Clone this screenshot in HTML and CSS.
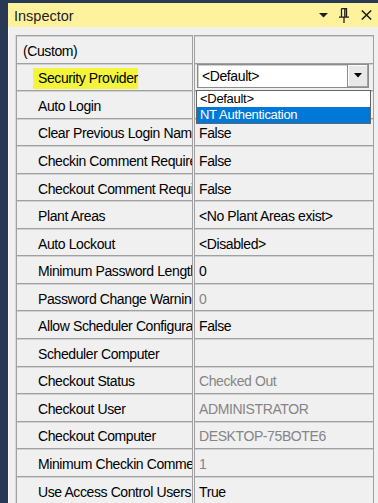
FILE: index.html
```html
<!DOCTYPE html>
<html>
<head>
<meta charset="utf-8">
<link rel="stylesheet" href="styles.css">
</head>
<body>
<div class="window">
  <div class="titlebar">
    <span class="title">Inspector</span>
    <div class="tools">
      <svg class="ico-drop" width="9" height="5" viewBox="0 0 9 5"><polygon points="0,0 9,0 4.5,4.5" fill="#1e1e1e"/></svg>
      <svg class="ico-pin" width="10" height="15" viewBox="0 0 10 15"><path d="M2.5 0.5 H7.5 V9 M2.5 0.5 V9 M5.8 0.5 V9 M0 9.2 H10 M5 9.2 V15" stroke="#1e1e1e" stroke-width="1.3" fill="none"/></svg>
      <svg class="ico-close" width="11" height="10" viewBox="0 0 11 10"><path d="M0.8 0.5 L10.2 9.5 M10.2 0.5 L0.8 9.5" stroke="#1e1e1e" stroke-width="1.5" fill="none"/></svg>
    </div>
  </div>
  <div class="panel">
    <div class="grid">
      <div class="cell name cat">(Custom)</div><div class="cell value"></div>
      <div class="cell name"><span class="hl">Security Provider</span></div>
      <div class="cell value combo-cell">
        <div class="combo">
          <span class="combo-text">&lt;Default&gt;</span>
          <span class="combo-btn"><svg width="8" height="5" viewBox="0 0 8 5"><polygon points="0,0 8,0 4,4.5" fill="#000"/></svg></span>
        </div>
        <div class="popup">
          <div class="opt">&lt;Default&gt;</div>
          <div class="opt sel">NT Authentication</div>
        </div>
      </div>
      <div class="cell name">Auto Login</div><div class="cell value"></div>
      <div class="cell name">Clear Previous Login Name</div><div class="cell value">False</div>
      <div class="cell name">Checkin Comment Required</div><div class="cell value">False</div>
      <div class="cell name">Checkout Comment Required</div><div class="cell value">False</div>
      <div class="cell name">Plant Areas</div><div class="cell value">&lt;No Plant Areas exist&gt;</div>
      <div class="cell name">Auto Lockout</div><div class="cell value">&lt;Disabled&gt;</div>
      <div class="cell name">Minimum Password Length</div><div class="cell value">0</div>
      <div class="cell name">Password Change Warning</div><div class="cell value muted">0</div>
      <div class="cell name">Allow Scheduler Configuration</div><div class="cell value">False</div>
      <div class="cell name">Scheduler Computer</div><div class="cell value"></div>
      <div class="cell name">Checkout Status</div><div class="cell value muted">Checked Out</div>
      <div class="cell name">Checkout User</div><div class="cell value muted">ADMINISTRATOR</div>
      <div class="cell name">Checkout Computer</div><div class="cell value muted">DESKTOP-75BOTE6</div>
      <div class="cell name">Minimum Checkin Comment</div><div class="cell value muted">1</div>
      <div class="cell name">Use Access Control Users</div><div class="cell value">True</div>
    </div>
  </div>
</div>
</body>
</html>
```
FILE: styles.css
```css
* { box-sizing: border-box; }

html, body {
  margin: 0;
  width: 378px;
  height: 503px;
  overflow: hidden;
  background: #293955;
  font-family: "Liberation Sans", Arial, sans-serif;
}

.window {
  height: 503px;
  padding: 3px 0 0 8px;
  display: flex;
  flex-direction: column;
}

.titlebar {
  height: 24px;
  flex: none;
  background: #fff29d;
  display: flex;
  align-items: center;
  padding: 0 6px 0 6px;
}

.title {
  font-size: 14.5px;
  color: #1e1e1e;
  padding-top: 1px;
}

.tools {
  margin-left: auto;
  display: flex;
  align-items: flex-start;
  height: 15px;
}

.ico-drop { margin-top: 5px; }
.ico-pin { margin-left: 11px; margin-top: 0; }
.ico-close { margin-left: 12px; margin-top: 2px; }

.panel {
  flex: 1;
  background: #f0f0f0;
  border-left: 1px solid #fafafa;
  padding: 8px 0 0 7px;
  overflow: hidden;
}

.grid {
  display: grid;
  grid-template-columns: 176px 180px;
  column-gap: 1px;
  grid-auto-rows: 27.56px;
  width: 358px;
  border-left: 1px solid #a0a0a0;
  box-shadow: -1px 0 0 #d8d8d8;
}

.cell {
  border-top: 1px solid #a0a0a0;
  box-shadow: inset 0 1px 0 #d2d2d2;
  display: flex;
  align-items: center;
  padding-top: 3px;
  white-space: nowrap;
  overflow: hidden;
  font-size: 14px;
  letter-spacing: -0.4px;
  color: #000;
  background: #f0f0f0;
}

.name {
  padding-left: 21px;
  border-right: 1px solid #a0a0a0;
}

.name.cat { padding-left: 6px; }

.value {
  padding-left: 4px;
  border-left: 1px solid #a0a0a0;
  border-right: 1px solid #a0a0a0;
}

.muted { color: #858585; }

.hl {
  background: #f4f53a;
  padding: 2px 0 3px 5px;
  margin-left: -5px;
}

.combo-cell {
  position: relative;
  overflow: visible;
  align-items: flex-start;
  padding: 0 0 0 2px;
}

.combo {
  width: 172px;
  height: 24px;
  background: #fff;
  border: 1px solid #8c8c8c;
  box-shadow: inset 1px 1px 0 #d0d0d0;
  display: flex;
  align-items: center;
}

.combo-text {
  flex: 1;
  padding-left: 4px;
  padding-top: 1px;
}

.combo-btn {
  width: 21px;
  height: 100%;
  background: #e8e8e8;
  border-left: 1px solid #8c8c8c;
  box-shadow: inset -1px -1px 0 #a0a0a0, inset 1px 1px 0 #fff;
  display: flex;
  align-items: center;
  justify-content: center;
}

.popup {
  position: absolute;
  z-index: 5;
  left: 1px;
  top: 26.4px;
  width: 175px;
  background: #fff;
  border: 1px solid #646464;
  font-size: 13px;
  letter-spacing: -0.3px;
}

.opt {
  height: 16px;
  line-height: 16px;
  padding-left: 3px;
}

.opt.sel {
  background: #0078d7;
  color: #fff;
}
```
